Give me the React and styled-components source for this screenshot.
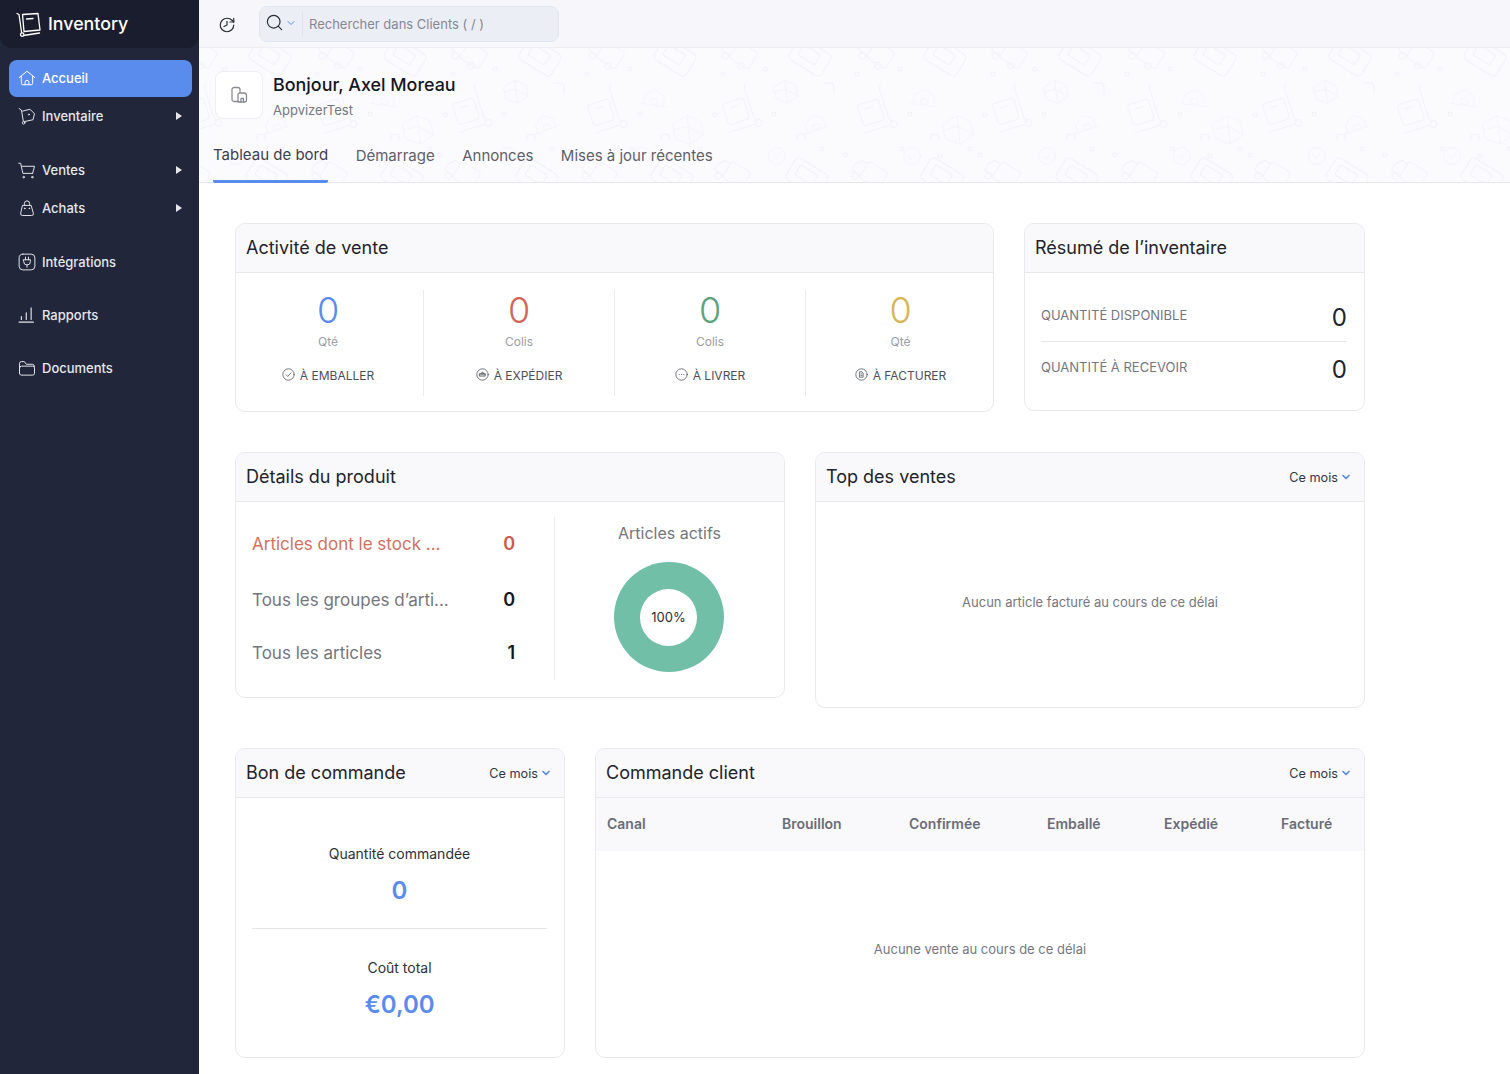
import React from 'react';
import styled, { createGlobalStyle } from 'styled-components';
import { ChevronDown, Search, History } from 'lucide-react';

// background doodles of the header, tile is 270x135
const doodles = {
  card: { s: 0.9, d: '<rect x="-21" y="-14" width="42" height="28" rx="5" transform="rotate(32)"/><rect x="-13" y="-8" width="22" height="13" rx="2" transform="rotate(32)"/>' },
  truck: { s: 0.8, d: '<g transform="rotate(32)"><rect x="-8" y="-11" width="28" height="24" rx="4"/><path d="M-8-7h-8l-5 8v9h13"/><circle cx="-13" cy="14" r="4"/><circle cx="10" cy="14" r="4"/></g>' },
  trolley: { s: 0.85, d: '<g transform="rotate(-18)"><rect x="-14" y="-14" width="26" height="26" rx="4"/><path d="M-6-7h9"/><path d="M20-30l-3 6v36l2 6M-16 20l31 0"/><circle cx="20" cy="20" r="4"/></g>' },
  hex: { s: 0.62, d: '<path d="M0-23l22 9 4 22-21 15-24-9-5-22z"/><path d="M0-23l2 17 24 14M2-6l-24 6M2-6l3 29"/>' },
  hexS: { s: 0.68, d: '<path d="M0-17l16 7 3 16-15 11-17-7-4-16z"/><path d="M0-17l1 13 18 10M1-4l-18 4M1-4l3 19"/>' },
  house: { s: 0.55, d: '<g transform="rotate(8)"><path d="M-20 14l1-16 18-12 18 11 0 17"/><path d="M-26 15h50"/><rect x="-7" y="4" width="13" height="9" rx="2"/></g>' },
  houseR: { s: 0.6, d: '<g transform="rotate(-20)"><path d="M-17 11l1-14 16-10 15 9 0 15"/><path d="M-22 12h42"/><rect x="-5" y="3" width="11" height="8" rx="2"/></g>' },
  check: { s: 0.7, d: '<circle r="12"/><path d="M-5 0l4 4 6-8"/>' },
  corner: { s: 1, d: '<path d="M-6-5h6q4 0 4 4v7"/>' },
  arc: { s: 1, d: '<path d="M-4 3v-3q0-3 4-3t4 3v3"/>' },
  dot: { s: 1, d: '<circle r="2"/>' },
};

const tileItems = [
  ['card', 145, 9], ['card', 10, 9], ['truck', 75, 4], ['truck', 212, 4],
  ['trolley', 72, 64], ['trolley', 207, 65], ['hex', 22, 82], ['hexS', 120, 44],
  ['house', 260, 49], ['houseR', 150, 75], ['check', 112, 108], ['check', 247, 108],
  ['truck', 68, 124], ['truck', 205, 124], ['card', 7, 129], ['card', 142, 129],
  ['corner', 165, 40], ['arc', 0, 89], ['arc', 136, 89], ['dot', 100, 21], ['dot', 192, 26],
  ['dot', 235, 21], ['dot', 58, 26], ['dot', 45, 107], ['dot', 180, 107], ['dot', 109, 66],
  ['dot', 245, 66], ['dot', 35, 101], ['dot', 237, 101], ['dot', 50, 67], ['dot', 5, 108], ['dot', 157, 101],
];

const tile = `<svg xmlns="http://www.w3.org/2000/svg" width="270" height="135" fill="none" stroke="#f3f2f9" stroke-width="1.2" stroke-linejoin="round" stroke-linecap="round">${tileItems
  .flatMap(([k, x, y]) => [x, x - 270, x + 270].map((px) => `<g transform="translate(${px} ${y}) scale(${doodles[k].s})">${doodles[k].d}</g>`))
  .join('')}</svg>`;
const tileUrl = `url("data:image/svg+xml,${encodeURIComponent(tile)}")`;

const GlobalStyle = createGlobalStyle`
  html, body {
    margin: 0;
    height: 100%;
    overflow: hidden;
    background: #fff;
    font-family: Inter, "Liberation Sans", sans-serif;
    color: #21263c;
  }
  * { box-sizing: border-box; }
`;

const Shell = styled.div`
  display: flex;
  height: 100vh;
  overflow: hidden;
`;

const Sidebar = styled.aside`
  width: 199px;
  flex-shrink: 0;
  background: #22263a;
  display: flex;
  flex-direction: column;
`;

const Brand = styled.div`
  height: 48px;
  background: #1a1d2d;
  border-radius: 0 0 12px 12px;
  display: flex;
  align-items: center;
  gap: 6px;
  padding: 0 0 1px 16px;
  color: #fff;
  font-size: 17.8px;
  font-weight: 500;
`;

const Nav = styled.nav`
  padding: 12px 7px 0 9px;
  display: flex;
  flex-direction: column;
  gap: 1px;
`;

const NavItem = styled.a`
  height: 37px;
  margin-top: ${(p) => p.$gap || 0}px;
  border-radius: 8px;
  display: flex;
  align-items: center;
  gap: 6px;
  padding: 0 10px 2px 9px;
  font-size: 13px;
  font-weight: 500;
  color: ${(p) => (p.$active ? '#fff' : '#e6e7ec')};
  background: ${(p) => (p.$active ? '#5a8cee' : 'transparent')};
  svg { flex-shrink: 0; }
`;

const Caret = styled.span`
  margin-left: auto;
  width: 0;
  height: 0;
  border-left: 6px solid #e6e7ec;
  border-top: 4px solid transparent;
  border-bottom: 4px solid transparent;
`;

const Main = styled.main`
  flex: 1;
  min-width: 0;
  display: flex;
  flex-direction: column;
`;

const TopBar = styled.div`
  height: 48px;
  background: #f7f7fb;
  border-bottom: 1px solid #eeeef4;
  display: flex;
  align-items: center;
  padding-left: 19px;
  gap: 23px;
`;

const HistoryIcon = styled(History)`
  transform: scaleX(-1);
  margin-top: 2px;
`;

const SearchBox = styled.div`
  width: 300px;
  height: 36px;
  margin-top: 1px;
  border-radius: 8px;
  background: #eceef6;
  border: 1px solid #e3e5ef;
  display: flex;
  align-items: center;
  padding-left: 5px;
`;

const SearchIcon = styled(Search)`
  margin-top: -4px;
`;

const SearchCaret = styled(ChevronDown)`
  margin: -3px 0 0 1px;
`;

const SearchDivider = styled.span`
  width: 1px;
  height: 24px;
  margin: 0 6px 0 5px;
  background: #e1e3ec;
`;

const SearchText = styled.span`
  font-size: 13px;
  color: #858894;
`;

const Hero = styled.header`
  height: 135px;
  flex-shrink: 0;
  background-color: #fbfbfe;
  background-image: ${tileUrl};
  background-position: 466px 0;
  border-bottom: 1px solid #e6e6ec;
  display: flex;
  flex-direction: column;
  justify-content: space-between;
`;

const Greeting = styled.div`
  display: flex;
  align-items: center;
  gap: 10px;
  padding: 23px 0 0 16px;
`;

const OrgBadge = styled.div`
  width: 48px;
  height: 48px;
  border-radius: 8px;
  background: #fff;
  border: 1px solid #eeeef3;
  display: flex;
  align-items: center;
  justify-content: center;
`;

const Hello = styled.div`
  font-size: 17.9px;
  font-weight: 500;
  color: #15171f;
  line-height: 24px;
  margin-top: 1px;
`;

const OrgName = styled.div`
  font-size: 13px;
  color: #75777f;
  margin-top: 4px;
  line-height: 18px;
`;

const Tabs = styled.div`
  display: flex;
  gap: 27.5px;
  padding-left: 14px;
`;

const Tab = styled.a`
  height: 42px;
  padding-top: ${(p) => (p.$active ? 4 : 5)}px;
  font-size: 15px;
  line-height: 20px;
  color: ${(p) => (p.$active ? '#3c3f4b' : '#5d5f6a')};
  border-bottom: 3px solid ${(p) => (p.$active ? '#5a8cee' : 'transparent')};
  border-radius: 0 0 2px 2px;
  margin-bottom: -1px;
`;

const Content = styled.div`
  padding: 40px 0 0 36px;
  display: flex;
  flex-direction: column;
  gap: 40px;
`;

const Row = styled.div`
  display: flex;
  align-items: flex-start;
  gap: 30px;
`;

const Card = styled.section`
  width: ${(p) => p.$w}px;
  height: ${(p) => p.$h}px;
  border: 1px solid #e9e9ed;
  border-radius: 10px;
  background: #fff;
  overflow: hidden;
  display: flex;
  flex-direction: column;
`;

const CardHead = styled.div`
  height: 49px;
  flex-shrink: 0;
  background: #f9f9fb;
  border-bottom: 1px solid #e9e9ed;
  display: flex;
  align-items: center;
  justify-content: space-between;
  padding: 0 12px 1px 10px;
`;

const CardTitle = styled.h3`
  margin: 0;
  font-size: 18px;
  font-weight: 400;
  color: #21232c;
`;

const Period = styled.span`
  display: flex;
  align-items: center;
  gap: 2px;
  font-size: 12.7px;
  color: #33353f;
  margin-top: 1px;
`;

const Stats = styled.div`
  display: grid;
  grid-template-columns: repeat(3, 191px) 189px;
  margin: 17px 0 0 -3px;
`;

const Stat = styled.div`
  height: 106px;
  display: flex;
  flex-direction: column;
  align-items: center;
  border-right: ${(p) => (p.$last ? 'none' : '1px solid #ececf0')};
`;

const StatValue = styled.div`
  font-size: 36px;
  font-weight: 300;
  line-height: 40px;
  color: ${(p) => p.$color};
`;

const StatUnit = styled.div`
  font-size: 12px;
  color: #9b9da6;
  margin-top: 4px;
  line-height: 16px;
`;

const StatLabel = styled.div`
  display: flex;
  align-items: center;
  gap: 5px;
  margin-top: 18px;
  font-size: 12px;
  line-height: 16px;
  color: #4c4e58;
  svg { margin-top: -3px; }
`;

const Summary = styled.div`
  padding: 17px 17px 0 16px;
`;

const SummaryRow = styled.div`
  height: 52px;
  padding-top: ${(p) => (p.$last ? 2 : 4)}px;
  display: flex;
  align-items: center;
  justify-content: space-between;
  border-bottom: ${(p) => (p.$last ? 'none' : '1px solid #e9e9ed')};
`;

const SummaryLabel = styled.span`
  font-size: 13px;
  color: #74767f;
  margin-bottom: 5px;
`;

const SummaryValue = styled.span`
  font-size: 24px;
  color: #21232c;
`;

const Details = styled.div`
  display: flex;
  margin: 15px 0 0 16px;
`;

const DetailList = styled.div`
  width: 303px;
  height: 163px;
  border-right: 1px solid #ececf0;
  padding-top: 14px;
  display: flex;
  flex-direction: column;
  gap: 31px;
`;

const DetailRow = styled.div`
  height: 25px;
  display: flex;
  align-items: center;
  justify-content: space-between;
  padding-right: 39px;
  margin-top: ${(p) => p.$nudge || 0}px;
  font-size: 17px;
  color: ${(p) => (p.$alert ? '#d2705f' : '#74767e')};
`;

const DetailValue = styled.b`
  font-size: 18px;
  font-weight: 600;
  color: ${(p) => (p.$alert ? '#d0594c' : '#15171f')};
`;

const Active = styled.div`
  flex: 1;
  display: flex;
  flex-direction: column;
  align-items: center;
  padding-right: 2px;
`;

const ActiveTitle = styled.div`
  font-size: 16px;
  color: #74767d;
  line-height: 20px;
  margin: 6px 0 19px;
  padding-left: 2px;
`;

const Donut = styled.div`
  width: 110px;
  height: 110px;
  border-radius: 50%;
  background: #72bfa8;
  display: flex;
  align-items: center;
  justify-content: center;
`;

const DonutHole = styled.div`
  width: 57px;
  height: 57px;
  border-radius: 50%;
  background: #fff;
  display: flex;
  align-items: center;
  justify-content: center;
  font-size: 13px;
  color: #2b2d35;
`;

const Empty = styled.div`
  flex: 1;
  display: flex;
  align-items: center;
  justify-content: center;
  font-size: 13px;
  color: #75777f;
  padding-bottom: ${(p) => p.$pb || 0}px;
`;

const Purchase = styled.div`
  flex: 1;
  margin: 0 17px 0 16px;
  display: flex;
  flex-direction: column;
`;

const PurchaseBlock = styled.div`
  height: ${(p) => (p.$last ? 'auto' : '131px')};
  display: flex;
  flex-direction: column;
  align-items: center;
  padding-top: ${(p) => p.$pt}px;
  border-bottom: ${(p) => (p.$last ? 'none' : '1px solid #e6e6ea')};
`;

const PurchaseLabel = styled.div`
  font-size: 14px;
  line-height: 18px;
  color: #2d2f38;
`;

const PurchaseValue = styled.div`
  font-size: 24px;
  font-weight: 600;
  line-height: 32px;
  margin-top: 12px;
  color: #5a8cee;
`;

const TableHead = styled.div`
  height: 53px;
  flex-shrink: 0;
  padding-bottom: 2px;
  background: #f9f9fb;
  display: grid;
  grid-template-columns: 175px 127px 138px 117px 117px 1fr;
  align-items: center;
  padding-left: 11px;
  font-size: 14px;
  font-weight: 600;
  color: #6b6d76;
`;

// hand drawn icons of the product
const Ico = ({ size = 18, color = 'currentColor', sw = 1.3, children }) => (
  <svg width={size} height={size} viewBox="0 0 24 24" fill="none" stroke={color} strokeWidth={sw} strokeLinecap="round" strokeLinejoin="round">
    {children}
  </svg>
);

const LogoIcon = () => (
  <svg width="26" height="26" viewBox="0 0 26 26" fill="none" stroke="#fff" strokeWidth="1.3" strokeLinecap="round" strokeLinejoin="round">
    <path d="M1 2.5l2 1 2.6 18" />
    <path d="M6.5 3.5l15.5-1 2 16.5-16 1.5z" />
    <path d="M10.5 8l6.5-.5" />
    <path d="M7.5 24.5l16-2.5" />
    <circle cx="6.2" cy="23.6" r="1.7" />
  </svg>
);

const HomeIcon = () => (
  <Ico>
    <path d="M1.5 11.5L12 3l10.5 8.5" />
    <path d="M4.5 9.5V19a2 2 0 0 0 2 2h11a2 2 0 0 0 2-2V9.5" />
    <path d="M9.5 21v-3.5a2.5 2.5 0 0 1 5 0V21" />
  </Ico>
);

const TrolleyIcon = () => (
  <Ico>
    <path d="M1.5 2l3 2 2.5 14" />
    <path d="M6 5.5l10-2.5 6 6-2 8-12 2.5" />
    <circle cx="14.5" cy="10" r=".7" />
    <circle cx="7.5" cy="21" r="1.8" />
  </Ico>
);

const CartIcon = () => (
  <Ico>
    <path d="M1 3h2.5l3 13.5h13" />
    <path d="M5.5 7h16.5l-2.5 9.5" />
    <circle cx="7.5" cy="21.5" r="1" />
    <circle cx="19" cy="21.5" r="1" />
  </Ico>
);

const BagIcon = () => (
  <Ico>
    <path d="M6.5 8.5h11l3 10.5a2.5 2.5 0 0 1-2.5 3H6a2.5 2.5 0 0 1-2.5-3z" />
    <path d="M8.5 8.5V6a3.5 3.5 0 0 1 7 0v2.5" />
    <circle cx="9" cy="12.5" r=".5" />
    <circle cx="15" cy="12.5" r=".5" />
  </Ico>
);

const PlugIcon = () => (
  <Ico>
    <rect x="1.5" y="1.5" width="21" height="21" rx="5" />
    <path d="M7.5 9h9v2.5a4.5 4.5 0 0 1-9 0z" />
    <path d="M10 5.5V9M14 5.5V9M12 16v3" />
  </Ico>
);

const BarsIcon = () => (
  <Ico sw={1.5}>
    <path d="M1.5 21.5h19" />
    <path d="M4.5 18v-4M11 18V9M17.5 18V2.5" />
  </Ico>
);

const FolderIcon = () => (
  <Ico>
    <path d="M2 18.5V6a2.5 2.5 0 0 1 2.5-2.5h4L11 7h8a3 3 0 0 1 3 3" />
    <path d="M2 12a2.5 2.5 0 0 1 2.5-2.5h15A2.5 2.5 0 0 1 22 12v7a2.5 2.5 0 0 1-2.5 2.5h-15A2.5 2.5 0 0 1 2 19z" />
  </Ico>
);

const OrgIcon = () => (
  <svg width="18" height="18" viewBox="0 0 18 18" fill="none" stroke="#8b8c93" strokeWidth="1.3" strokeLinejoin="round" strokeLinecap="round">
    <path d="M8 15.5H4a2 2 0 0 1-2-2V3.5a2 2 0 0 1 2-2h4a2 2 0 0 1 2 2V6" />
    <path d="M8 16V9a2 2 0 0 1 2-2h4a2.5 2.5 0 0 1 2.5 2.5V14a2 2 0 0 1-2 2z" />
    <path d="M11 16v-3.5h2.5V16" />
  </svg>
);

const CircleIcon = ({ children }) => (
  <Ico size={13} color="#55575f" sw={1.5}>
    <circle cx="12" cy="12" r="10.5" />
    {children}
  </Ico>
);

const statItems = [
  { color: '#5a8cee', unit: 'Qté', label: 'À EMBALLER', mark: <path d="M7.5 12.5l3 3 6-6.5" /> },
  { color: '#d0675a', unit: 'Colis', label: 'À EXPÉDIER', mark: <path d="M7 10h10v5H7zM10 10l2-3 2 3M7 12.5h10" /> },
  { color: '#5aa37c', unit: 'Colis', label: 'À LIVRER', mark: <path d="M7.5 12h.5M11.8 12h.5M16 12h.5" /> },
  { color: '#d6b655', unit: 'Qté', label: 'À FACTURER', mark: <path d="M9 7h4l2 2.5V17H9zM11 11h2M11 14h2" /> },
];

const thisMonth = (
  <Period>
    Ce mois <ChevronDown size={12} color="#5a8cee" strokeWidth={3.5} />
  </Period>
);

export default function App() {
  return (
    <>
      <GlobalStyle />
      <Shell>
        <Sidebar>
          <Brand>
            <LogoIcon />
            Inventory
          </Brand>
          <Nav>
            <NavItem $active>
              <HomeIcon />
              Accueil
            </NavItem>
            <NavItem>
              <TrolleyIcon />
              Inventaire
              <Caret />
            </NavItem>
            <NavItem $gap={16}>
              <CartIcon />
              Ventes
              <Caret />
            </NavItem>
            <NavItem>
              <BagIcon />
              Achats
              <Caret />
            </NavItem>
            <NavItem $gap={16}>
              <PlugIcon />
              Intégrations
            </NavItem>
            <NavItem $gap={15}>
              <BarsIcon />
              Rapports
            </NavItem>
            <NavItem $gap={15}>
              <FolderIcon />
              Documents
            </NavItem>
          </Nav>
        </Sidebar>
        <Main>
          <TopBar>
            <HistoryIcon size={18} strokeWidth={1.6} color="#2b2d35" />
            <SearchBox>
              <SearchIcon size={19} strokeWidth={1.5} color="#2b2d35" />
              <SearchCaret size={12} strokeWidth={2} color="#5a8cee" />
              <SearchDivider />
              <SearchText>Rechercher dans Clients ( / )</SearchText>
            </SearchBox>
          </TopBar>
          <Hero>
            <Greeting>
              <OrgBadge>
                <OrgIcon />
              </OrgBadge>
              <div>
                <Hello>Bonjour, Axel Moreau</Hello>
                <OrgName>AppvizerTest</OrgName>
              </div>
            </Greeting>
            <Tabs>
              <Tab $active>Tableau de bord</Tab>
              <Tab>Démarrage</Tab>
              <Tab>Annonces</Tab>
              <Tab>Mises à jour récentes</Tab>
            </Tabs>
          </Hero>
          <Content>
            <Row>
              <Card $w={759} $h={189}>
                <CardHead>
                  <CardTitle>Activité de vente</CardTitle>
                </CardHead>
                <Stats>
                  {statItems.map((s, i) => (
                    <Stat key={s.label} $last={i === statItems.length - 1}>
                      <StatValue $color={s.color}>0</StatValue>
                      <StatUnit>{s.unit}</StatUnit>
                      <StatLabel>
                        <CircleIcon>{s.mark}</CircleIcon>
                        {s.label}
                      </StatLabel>
                    </Stat>
                  ))}
                </Stats>
              </Card>
              <Card $w={341} $h={188}>
                <CardHead>
                  <CardTitle>Résumé de l’inventaire</CardTitle>
                </CardHead>
                <Summary>
                  <SummaryRow>
                    <SummaryLabel>QUANTITÉ DISPONIBLE</SummaryLabel>
                    <SummaryValue>0</SummaryValue>
                  </SummaryRow>
                  <SummaryRow $last>
                    <SummaryLabel>QUANTITÉ À RECEVOIR</SummaryLabel>
                    <SummaryValue>0</SummaryValue>
                  </SummaryRow>
                </Summary>
              </Card>
            </Row>
            <Row>
              <Card $w={550} $h={246}>
                <CardHead>
                  <CardTitle>Détails du produit</CardTitle>
                </CardHead>
                <Details>
                  <DetailList>
                    <DetailRow $alert>
                      Articles dont le stock ...
                      <DetailValue $alert>0</DetailValue>
                    </DetailRow>
                    <DetailRow>
                      Tous les groupes d’arti...
                      <DetailValue>0</DetailValue>
                    </DetailRow>
                    <DetailRow $nudge={-3}>
                      Tous les articles
                      <DetailValue>1</DetailValue>
                    </DetailRow>
                  </DetailList>
                  <Active>
                    <ActiveTitle>Articles actifs</ActiveTitle>
                    <Donut>
                      <DonutHole>100%</DonutHole>
                    </Donut>
                  </Active>
                </Details>
              </Card>
              <Card $w={550} $h={256}>
                <CardHead>
                  <CardTitle>Top des ventes</CardTitle>
                  {thisMonth}
                </CardHead>
                <Empty $pb={6}>Aucun article facturé au cours de ce délai</Empty>
              </Card>
            </Row>
            <Row>
              <Card $w={330} $h={310}>
                <CardHead>
                  <CardTitle>Bon de commande</CardTitle>
                  {thisMonth}
                </CardHead>
                <Purchase>
                  <PurchaseBlock $pt={47}>
                    <PurchaseLabel>Quantité commandée</PurchaseLabel>
                    <PurchaseValue>0</PurchaseValue>
                  </PurchaseBlock>
                  <PurchaseBlock $pt={30} $last>
                    <PurchaseLabel>Coût total</PurchaseLabel>
                    <PurchaseValue>€0,00</PurchaseValue>
                  </PurchaseBlock>
                </Purchase>
              </Card>
              <Card $w={770} $h={310}>
                <CardHead>
                  <CardTitle>Commande client</CardTitle>
                  {thisMonth}
                </CardHead>
                <TableHead>
                  <span>Canal</span>
                  <span>Brouillon</span>
                  <span>Confirmée</span>
                  <span>Emballé</span>
                  <span>Expédié</span>
                  <span>Facturé</span>
                </TableHead>
                <Empty $pb={11}>Aucune vente au cours de ce délai</Empty>
              </Card>
            </Row>
          </Content>
        </Main>
      </Shell>
    </>
  );
}
